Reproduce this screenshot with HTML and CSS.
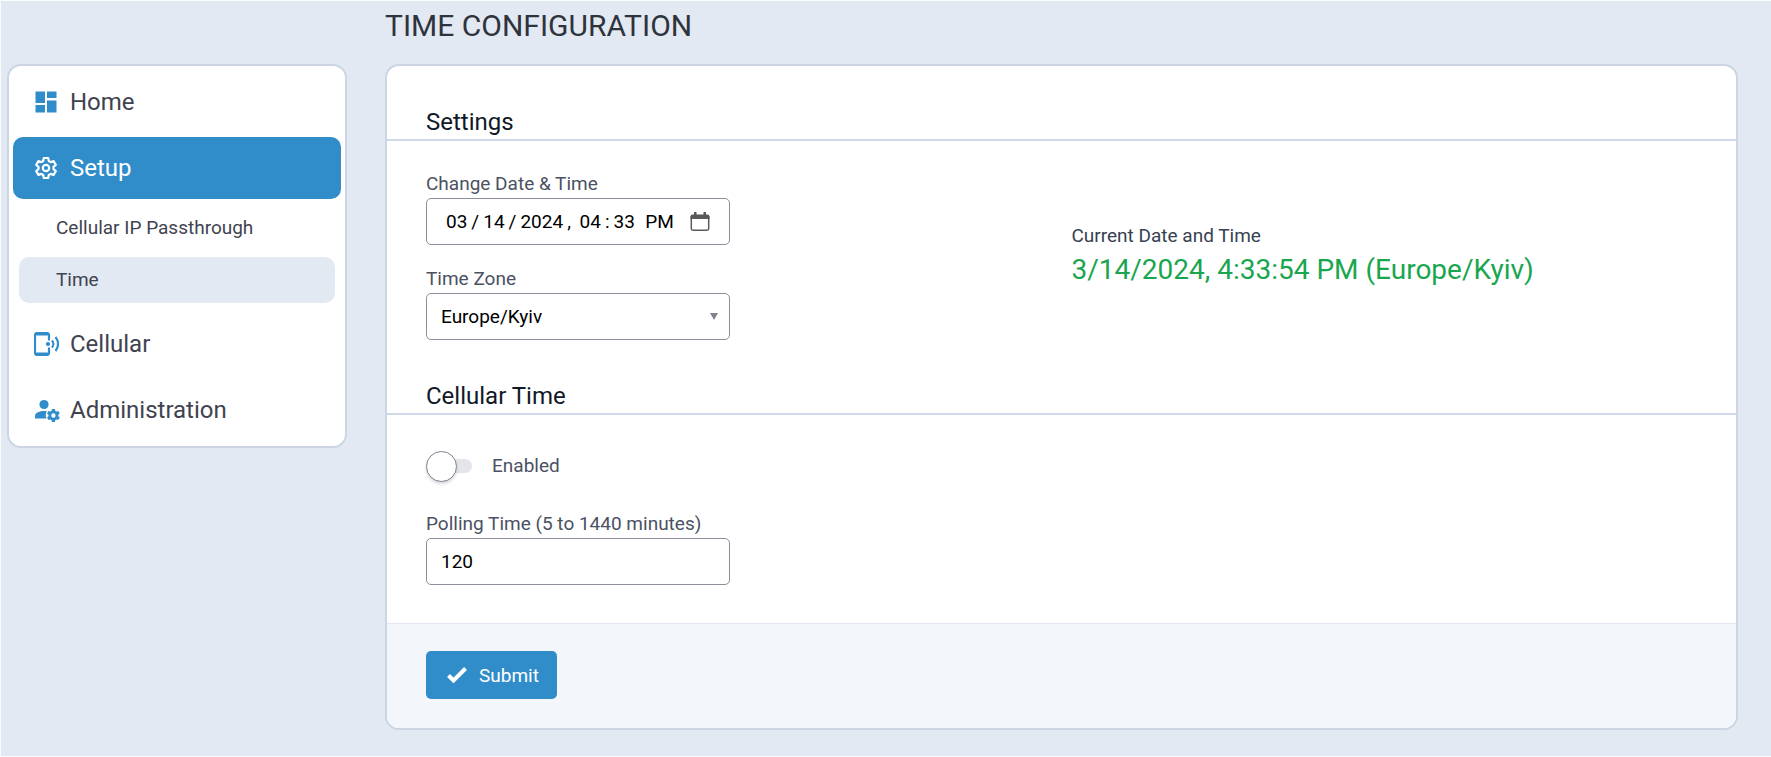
FILE: index.html
```html
<!DOCTYPE html>
<html lang="en">
<head>
<meta charset="utf-8">
<meta name="viewport" content="width=device-width, initial-scale=1">
<title>Time Configuration</title>
<link rel="stylesheet" href="styles.css">
</head>
<body>
<div class="layout">
  <nav class="sidebar" aria-label="Main">
    <a class="nav-item" href="#home">
      <svg class="nav-icon" viewBox="0 0 24 24" fill="currentColor" aria-hidden="true"><path d="M1.500 1.500h9.500v11.500H1.500zM13 1.500h9.500v6.500h-9.500zM13 10.500h9.500v12h-9.500zM1.500 15h9.500v7.500H1.500z"/></svg>
      <span>Home</span>
    </a>
    <a class="nav-item nav-item-active" href="#setup">
      <svg class="nav-icon" viewBox="0 0 24 24" fill="none" stroke="currentColor" stroke-width="2.200" stroke-linejoin="round" aria-hidden="true"><path d="M9.800 2h4.400l.6 3 1.900 1.100 2.900-1 2.200 3.800-2.300 2v2.200l2.300 2-2.200 3.800-2.900-1-1.900 1.100-.6 3H9.800l-.6-3-1.900-1.100-2.900 1-2.200-3.800 2.300-2v-2.200l-2.300-2 2.200-3.800 2.900 1L9.200 5z"/><circle cx="12" cy="12" r="3.200"/></svg>
      <span>Setup</span>
    </a>
    <div class="subnav">
      <a class="subnav-item" href="#passthrough">Cellular IP Passthrough</a>
      <a class="subnav-item subnav-item-active" href="#time" aria-current="page">Time</a>
    </div>
    <a class="nav-item" href="#cellular">
      <svg class="nav-icon nav-icon-wide" viewBox="0 0 26 24" fill="none" stroke="currentColor" stroke-width="2.200" aria-hidden="true"><path d="M15 8.500V3.200A2.200 2.200 0 0 0 12.800 1H3.200A2.200 2.200 0 0 0 1 3.200v17.600A2.200 2.200 0 0 0 3.200 23h9.600a2.200 2.200 0 0 0 2.200-2.200v-5.300"/><path d="M1 2.500h14M1 21.500h14"/><circle cx="14" cy="12" r="2" fill="currentColor" stroke="none"/><path d="M12 12h4"/><path d="M18 8.500c1.700 2 1.700 5 0 7M21.500 5c3.400 4 3.400 10 0 14"/></svg>
      <span>Cellular</span>
    </a>
    <a class="nav-item" href="#administration">
      <svg class="nav-icon nav-icon-wide" viewBox="0 0 26 24" fill="currentColor" aria-hidden="true"><circle cx="10" cy="6.500" r="4.600"/><path d="M1 20.500v-2.600C1 14.500 6 13 10 13c1 0 2 .1 2.900.2a8 8 0 0 0-.4 7.300z"/><path fill-rule="evenodd" d="M17.900 11h3l.4 1.900 1.100.7 1.900-.7 1.500 2.600-1.500 1.300v1.400l1.500 1.300-1.500 2.600-1.900-.7-1.100.7-.4 1.900h-3l-.4-1.900-1.100-.7-1.900.7-1.500-2.600 1.500-1.300v-1.400L13 15.500l1.500-2.600 1.900.7 1.100-.7zM19.400 15.300a2.200 2.200 0 1 0 0 4.400 2.200 2.200 0 0 0 0-4.400z"/></svg>
      <span>Administration</span>
    </a>
  </nav>

  <main class="content">
    <h1 class="page-title">TIME CONFIGURATION</h1>
    <form class="card" action="#">
      <h2 class="section-title">Settings</h2>
      <div class="section settings">
        <div class="fields">
          <div class="field">
            <label class="label" for="datetime">Change Date &amp; Time</label>
            <input class="control control-date" id="datetime" type="datetime-local" value="2024-03-14T16:33">
          </div>
          <div class="field">
            <label class="label" for="zone">Time Zone</label>
            <span class="select-wrap">
              <select class="control control-select" id="zone"><option>Europe/Kyiv</option></select>
              <svg class="select-arrow" viewBox="0 0 8 8" fill="currentColor" aria-hidden="true"><path d="M0 1h8L4 8z"/></svg>
            </span>
          </div>
        </div>
        <div class="current">
          <p class="current-label">Current Date and Time</p>
          <p class="current-value">3/14/2024, 4:33:54 PM (Europe/Kyiv)</p>
        </div>
      </div>
      <h2 class="section-title">Cellular Time</h2>
      <div class="section cellular">
        <div class="toggle-row">
          <input class="toggle" id="enabled" type="checkbox" role="switch">
          <label class="toggle-label" for="enabled">Enabled</label>
        </div>
        <div class="field">
          <label class="label" for="polling">Polling Time (5 to 1440 minutes)</label>
          <input class="control" id="polling" type="text" inputmode="numeric" value="120">
        </div>
      </div>
      <div class="card-footer">
        <button class="submit" type="submit">
          <svg class="submit-icon" viewBox="0 0 20 16" fill="none" stroke="currentColor" stroke-width="4" aria-hidden="true"><path d="M1.500 8.500l5 5L18.500 1.500"/></svg>
          <span>Submit</span>
        </button>
      </div>
    </form>
  </main>
</div>
</body>
</html>
```
FILE: styles.css
```css
* {
  box-sizing: border-box;
}

body {
  margin: 0;
  min-height: 100vh;
  border: 1px solid #fbfcfd;
  border-right: 0;
  background: #e2e9f3;
  color: #374151;
  font-family: Roboto, "Liberation Sans", sans-serif;
  font-size: 19px;
  line-height: 24px;
}

.layout {
  display: flex;
  align-items: flex-start;
  gap: 38px;
  padding: 0 33px 26px 6px;
}

/* Sidebar */

.sidebar {
  flex: 0 0 340px;
  display: flex;
  flex-direction: column;
  gap: 4px;
  margin-top: 63px;
  padding: 5px 4px;
  border: 2px solid #cbd5e3;
  border-radius: 14px;
  background: #fff;
}

.nav-item {
  display: flex;
  align-items: center;
  gap: 12px;
  height: 62px;
  padding: 0 21px;
  border-radius: 10px;
  color: #3f4350;
  font-size: 24px;
  text-decoration: none;
}

.nav-item-active {
  background: #308dca;
  color: #fff;
}

.nav-icon {
  width: 24px;
  height: 24px;
  color: #308dca;
}

.nav-icon-wide {
  width: 26px;
  margin-right: -2px;
}

.nav-item-active .nav-icon {
  color: #fff;
}

.subnav {
  display: flex;
  flex-direction: column;
  gap: 6px;
  padding: 2px 6px 6px;
}

.subnav-item {
  display: flex;
  align-items: center;
  height: 46px;
  padding: 0 37px;
  border-radius: 10px;
  color: #3f4350;
  text-decoration: none;
}

.subnav-item-active {
  background: #e2e9f3;
}

/* Page */

.content {
  flex: 1;
  min-width: 0;
}

.page-title {
  margin: 7px 0 20px;
  color: #2f343c;
  font-size: 30px;
  font-weight: 400;
  line-height: 36px;
}

.card {
  overflow: hidden;
  border: 2px solid #cbd5e3;
  border-radius: 14px;
  background: #fff;
}

.section-title {
  margin: 0;
  padding: 41px 39px 2px;
  border-bottom: 2px solid #cfd8e6;
  color: #111827;
  font-size: 24px;
  font-weight: 400;
  line-height: 30px;
}

.section {
  padding: 31px 39px 0;
}

.settings {
  display: grid;
  grid-template-columns: 1fr 1fr;
  align-items: center;
  gap: 20px;
}

.fields {
  display: flex;
  flex-direction: column;
  gap: 22px;
}

.field {
  width: 304px;
}

.label {
  display: block;
  padding-bottom: 2px;
  color: #4b5162;
}

.control {
  display: block;
  width: 100%;
  height: 47px;
  padding: 0 14px;
  border: 1px solid #8b8e9c;
  border-radius: 5px;
  background: #fff;
  color: #000;
  font-family: inherit;
  font-size: 19px;
}

.control-date {
  padding: 0 19px 0 15px;
}

.control-date::-webkit-datetime-edit-month-field,
.control-date::-webkit-datetime-edit-day-field,
.control-date::-webkit-datetime-edit-year-field,
.control-date::-webkit-datetime-edit-hour-field,
.control-date::-webkit-datetime-edit-minute-field,
.control-date::-webkit-datetime-edit-ampm-field {
  padding: 0 4px;
}

.control-date::-webkit-calendar-picker-indicator {
  width: 20px;
  height: 20px;
  margin: 0;
  padding: 0;
  background: url("data:image/svg+xml,%3Csvg xmlns='http://www.w3.org/2000/svg' viewBox='0 0 20 20'%3E%3Cpath fill='none' stroke='%23595959' stroke-width='1.500' d='M1.300 4v12.500a1.700 1.700 0 0 0 1.700 1.700h14a1.700 1.700 0 0 0 1.700-1.700V4'/%3E%3Cpath fill='%23595959' d='M.5 7V4.500a2 2 0 0 1 2-2H4V0h2.500v2.500h7V0H16v2.500h1.500a2 2 0 0 1 2 2V7z'/%3E%3C/svg%3E") center / 20px 20px no-repeat;
}

.select-wrap {
  position: relative;
  display: block;
}

.control-select {
  appearance: none;
}

.select-arrow {
  position: absolute;
  top: 19px;
  right: 12px;
  width: 8px;
  height: 8px;
  color: #80838c;
  pointer-events: none;
}

.current-label {
  margin: 0 0 4px;
}

.current-value {
  margin: 0;
  color: #1aa64f;
  font-size: 28px;
  line-height: 36px;
}

.cellular {
  padding: 36px 39px 38px;
}

.toggle-row {
  display: flex;
  align-items: center;
  gap: 20px;
  margin-bottom: 31px;
}

.toggle {
  appearance: none;
  display: flex;
  align-items: center;
  width: 46px;
  height: 14px;
  margin: 8px 0;
  border-radius: 7px;
  background: #e4e5ea;
}

.toggle::before {
  content: "";
  flex: none;
  width: 29px;
  height: 29px;
  border: 1px solid #7f8490;
  border-radius: 50%;
  background: #fff;
  box-shadow: 0 2px 3px rgba(0, 0, 0, 0.15);
}

.toggle:checked {
  justify-content: flex-end;
  background: #308dca;
}

.toggle-label {
  color: #4b5162;
}

.card-footer {
  padding: 27px 39px 29px;
  border-top: 1px solid #e2e7f1;
  background: #f3f7fc;
}

.submit {
  display: flex;
  align-items: center;
  gap: 12px;
  height: 48px;
  padding: 0 18px 0 21px;
  border: 0;
  border-radius: 5px;
  background: #308dca;
  color: #fff;
  font-family: inherit;
  font-size: 19px;
}

.submit-icon {
  width: 20px;
  height: 16px;
}
```
